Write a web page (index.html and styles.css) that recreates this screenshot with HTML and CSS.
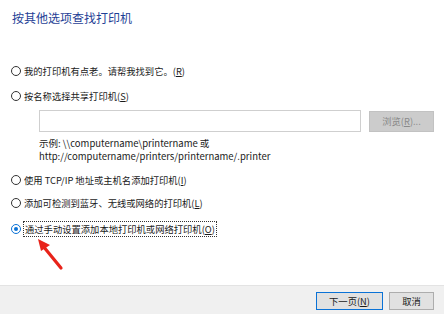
FILE: index.html
```html
<!DOCTYPE html>
<html lang="zh-CN">
<head>
<meta charset="utf-8">
<link rel="stylesheet" href="styles.css">
</head>
<body>
<div class="window">
  <main class="content">
    <h1 class="title">按其他选项查找打印机</h1>
    <div class="options">
      <label class="opt opt-first"><span class="radio"></span><span class="label">我的打印机有点老。请帮我找到它。(<u>R</u>)</span></label>
      <label class="opt opt-second"><span class="radio"></span><span class="label">按名称选择共享打印机(<u>S</u>)</span></label>
      <div class="share">
        <div class="input-row">
          <div class="input"></div>
          <div class="browse">浏览(<u>R</u>)...</div>
        </div>
        <div class="example">示例: \\computername\printername 或<br>http://computername/printers/printername/.printer</div>
      </div>
      <label class="opt opt-third"><span class="radio"></span><span class="label">使用 TCP/IP 地址或主机名添加打印机(<u>I</u>)</span></label>
      <label class="opt opt-fourth"><span class="radio"></span><span class="label">添加可检测到蓝牙、无线或网络的打印机(<u>L</u>)</span></label>
      <label class="opt opt-fifth"><span class="radio checked"></span><span class="label focus">通过手动设置添加本地打印机或网络打印机(<u>O</u>)</span></label>
    </div>
    <svg class="arrow" width="40" height="40" viewBox="0 0 40 40">
      <path d="M27 32 L9 10" stroke="#e8231a" stroke-width="3.2" stroke-linecap="round"/>
      <polygon points="4,3 16,9 7,15" fill="#e8231a"/>
    </svg>
  </main>
  <footer class="footer">
    <button class="btn primary">下一页(<u>N</u>)</button>
    <button class="btn">取消</button>
  </footer>
</div>
</body>
</html>
```
FILE: styles.css
```css
* { box-sizing: border-box; }
html, body { margin: 0; padding: 0; background: #fff; }
body {
  width: 444px;
  height: 314px;
  overflow: hidden;
  font-family: "Noto Sans CJK SC", "Noto Sans", sans-serif;
  font-size: 9.3px;
  color: #1a1a1a;
}
.window {
  display: flex;
  flex-direction: column;
  height: 314px;
}
.content {
  position: relative;
  height: 285px;
  padding: 10px 0 0 11px;
}
.title {
  margin: 0;
  font-weight: normal;
  font-size: 12px;
  line-height: 16px;
  color: #1f3f96;
  padding-left: 1px;
}
.options {
  display: flex;
  flex-direction: column;
}
.opt {
  display: flex;
  align-items: center;
  height: 14px;
  line-height: 14px;
}
.opt-first { margin-top: 38px; }
.opt-second { margin-top: 11px; }
.opt-third { margin-top: 10px; }
.opt-fourth { margin-top: 9px; }
.opt-fifth { margin-top: 12px; }
.radio {
  width: 10px;
  height: 10px;
  border: 1px solid #333;
  border-radius: 50%;
  margin-right: 3px;
  flex: none;
  background: #fff;
  position: relative;
}
.radio.checked {
  border-color: #0a72d6;
}
.radio.checked::after {
  content: "";
  position: absolute;
  left: 2px;
  top: 2px;
  width: 4px;
  height: 4px;
  border-radius: 50%;
  background: #0a72d6;
}
.label u { text-decoration: underline; }
.label.focus {
  outline: 1px dotted #333;
  outline-offset: 0;
  padding: 0 1px;
}
.share {
  padding-left: 28px;
  margin-top: 7px;
}
.input-row {
  display: flex;
  align-items: center;
}
.input {
  width: 322px;
  height: 22px;
  border: 1px solid #cfcfcf;
  background: #fff;
}
.browse {
  margin-left: 8px;
  width: 65px;
  height: 21px;
  background: #cccccc;
  border: 1px solid #c2c2c2;
  color: #8a8a8a;
  display: flex;
  align-items: center;
  justify-content: center;
}
.example {
  margin-top: 5px;
  line-height: 13px;
  color: #1a1a1a;
  font-size: 9.5px;
}
.arrow {
  position: absolute;
  left: 34px;
  top: 236px;
}
.footer {
  height: 29px;
  background: #f0f0f0;
  border-top: 1px solid #e3e3e3;
  display: flex;
  justify-content: flex-end;
  align-items: flex-start;
  padding: 6px 10px 0 0;
  gap: 6px;
}
.btn {
  font-family: inherit;
  font-size: 9.3px;
  color: #1a1a1a;
  height: 18px;
  padding: 0;
  background: #e1e1e1;
  border: 1px solid #adadad;
  line-height: 16px;
}
.btn.primary {
  width: 67px;
  border-color: #0a72d6;
}
.btn:not(.primary) { width: 45px; }
```
